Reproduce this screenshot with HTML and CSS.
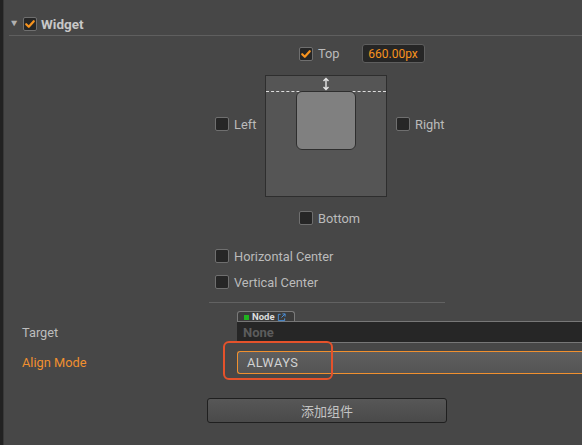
FILE: index.html
```html
<!DOCTYPE html>
<html>
<head>
<meta charset="utf-8">
<link rel="stylesheet" href="styles.css">
</head>
<body>
<div class="page">
  <div class="strip"></div>
  <div class="main">
    <div class="header">
      <span class="caret">&#9660;</span>
      <span class="cb cb-on"><svg viewBox="0 0 14 14" width="14" height="14"><path d="M3.2 7.2 L5.8 9.8 L10.8 4.2" fill="none" stroke="#f7931e" stroke-width="2.2" stroke-linecap="round" stroke-linejoin="round"/></svg></span>
      <span class="title">Widget</span>
    </div>

    <div class="wbody">
      <div class="row-top">
        <span class="cb cb-on"><svg viewBox="0 0 14 14" width="14" height="14"><path d="M3.2 7.2 L5.8 9.8 L10.8 4.2" fill="none" stroke="#f7931e" stroke-width="2.2" stroke-linecap="round" stroke-linejoin="round"/></svg></span>
        <span class="lbl">Top</span>
        <span class="numbox">660.00px</span>
      </div>

      <div class="row-diagram">
        <div class="side side-left"><span class="cb"></span><span class="lbl">Left</span></div>
        <div class="box">
          <div class="dash"></div>
          <svg class="arrow" viewBox="0 0 10 14" width="10" height="14"><path d="M5 1.5 V12.5 M2.5 4 L5 1.5 L7.5 4 M2.5 10 L5 12.5 L7.5 10" fill="none" stroke="#e6e6e6" stroke-width="1.4"/></svg>
          <div class="inner"></div>
        </div>
        <div class="side side-right"><span class="cb"></span><span class="lbl">Right</span></div>
      </div>

      <div class="row-bottom">
        <span class="cb"></span><span class="lbl">Bottom</span>
      </div>

      <div class="row-opt row-h">
        <span class="cb"></span><span class="lbl">Horizontal Center</span>
      </div>
      <div class="row-opt row-v">
        <span class="cb"></span><span class="lbl">Vertical Center</span>
      </div>
      <div class="sep"></div>
    </div>

    <div class="prop prop-target">
      <div class="plabel">Target</div>
      <div class="pval">
        <div class="tab"><span class="green"></span><span class="tabtxt">Node</span><svg class="link" viewBox="0 0 10 10" width="9" height="9"><path d="M4 1.5 H1.5 V8.5 H8.5 V6" fill="none" stroke="#4a8fd8" stroke-width="1.1"/><path d="M5 5 L9 1 M6 1 H9 V4" fill="none" stroke="#4a8fd8" stroke-width="1.1"/></svg></div>
        <div class="field">None</div>
      </div>
    </div>

    <div class="prop prop-align">
      <div class="plabel orange">Align Mode</div>
      <div class="select">ALWAYS</div>
      <div class="highlight"></div>
    </div>

    <div class="btnrow"><div class="btn">添加组件</div></div>
  </div>
</div>
</body>
</html>
```

FILE: styles.css
```css
html, body {
  margin: 0;
  padding: 0;
  background: #474747;
}
body {
  font-family: Roboto, "Liberation Sans", "Noto Sans CJK SC", sans-serif;
  font-size: 12.8px;
  color: #bdbdbd;
  width: 582px;
  height: 445px;
  overflow: hidden;
}
.page {
  display: flex;
  height: 445px;
}
.strip {
  width: 3px;
  background: #222222;
  border-right: 1px solid #383838;
  flex: none;
}
.main {
  flex: 1;
  position: relative;
}
.header {
  margin-top: 12px;
  margin-left: 5px;
  height: 23px;
  border-bottom: 1px solid #5f5f5f;
  display: flex;
  align-items: center;
}
.caret {
  font-size: 9px;
  color: #b0b0b0;
  width: 13px;
  margin-left: 1px;
  line-height: 1;
  transform: scaleX(1.15);
}
.cb {
  width: 12px;
  height: 12px;
  border: 1px solid #6f6f6f;
  background: #262626;
  border-radius: 2px;
  display: inline-flex;
  align-items: center;
  justify-content: center;
  flex: none;
}
.cb svg {
  display: block;
  flex: none;
}
.title {
  font-weight: bold;
  color: #c8c8c8;
  margin-left: 4px;
  font-size: 13.5px;
}
.lbl {
  margin-left: 5px;
  color: #bbbbbb;
  white-space: nowrap;
}
.wbody {
  margin-left: 205px;
  width: 236px;
}
.row-top {
  margin-top: 8px;
  height: 19px;
  display: flex;
  align-items: center;
  padding-left: 90px;
}
.numbox {
  margin-left: 22px;
  width: 61px;
  height: 17px;
  border: 1px solid #5e5e5e;
  border-radius: 3px;
  background: #262626;
  color: #f7931e;
  display: flex;
  align-items: center;
  justify-content: center;
  font-size: 12px;
}
.row-diagram {
  margin-top: 12px;
  display: flex;
  align-items: flex-start;
  padding-left: 6px;
}
.side {
  display: flex;
  align-items: center;
  margin-top: 42px;
  height: 14px;
}
.side-left {
  width: 50px;
}
.side-right {
  margin-left: 9px;
}
.box {
  position: relative;
  width: 120px;
  height: 120px;
  background: #555555;
  border: 1px solid #2e2e2e;
  flex: none;
}
.dash {
  position: absolute;
  left: 0;
  right: 0;
  top: 15px;
  border-top: 1px dashed #dddddd;
}
.arrow {
  position: absolute;
  left: 55px;
  top: 1px;
}
.inner {
  position: absolute;
  left: 30px;
  top: 15px;
  width: 58px;
  height: 57px;
  background: #808080;
  border: 1px solid #2e2e2e;
  border-radius: 6px;
}
.row-bottom {
  margin-top: 14px;
  height: 14px;
  display: flex;
  align-items: center;
  padding-left: 90px;
}
.row-opt {
  height: 14px;
  display: flex;
  align-items: center;
  padding-left: 6px;
}
.row-h {
  margin-top: 24px;
}
.row-v {
  margin-top: 12px;
}
.sep {
  margin-top: 13px;
  height: 1px;
  background: #626262;
}
.prop {
  display: flex;
  position: relative;
}
.plabel {
  width: 233px;
  padding-left: 18px;
  flex: none;
  box-sizing: border-box;
  color: #bdbdbd;
}
.orange {
  color: #f0902f;
}
.prop-target {
  margin-top: 9px;
}
.prop-target .plabel {
  padding-top: 13px;
}
.pval {
  flex: 1;
  min-width: 0;
}
.tab {
  height: 11px;
  border: 1px solid #7a7a7a;
  border-bottom: none;
  border-radius: 3px 3px 0 0;
  background: #3b3b3b;
  display: flex;
  align-items: center;
  padding-left: 6px;
  box-sizing: border-box;
  width: 58px;
  margin-top: -1px;
}
.green {
  width: 5px;
  height: 5px;
  background: #1fb31f;
  flex: none;
}
.tabtxt {
  font-size: 9.5px;
  font-weight: bold;
  color: #dddddd;
  margin-left: 3px;
  line-height: 10px;
}
.link {
  margin-left: 2px;
  flex: none;
}
.field {
  background: #262626;
  border-top: 1px solid #777777;
  border-bottom: 1px solid #777777;
  color: #5c5c5c;
  font-weight: bold;
  font-size: 13px;
  padding-left: 6px;
  line-height: 21px;
  margin-top: -1px;
  box-sizing: border-box;
  height: 22px;
}
.prop-align {
  margin-top: 8px;
  align-items: center;
}
.select {
  flex: 1;
  height: 23px;
  box-sizing: border-box;
  border: 1px solid #f0902f;
  border-right: none;
  border-radius: 3px 0 0 3px;
  background: linear-gradient(#5f5f5f, #545454);
  color: #d2d2d2;
  padding-left: 9px;
  line-height: 21px;
  letter-spacing: 0.5px;
}
.highlight {
  position: absolute;
  left: 219px;
  top: -10px;
  width: 106px;
  height: 35px;
  border: 2px solid #e5522b;
  border-radius: 6px;
}
.btnrow {
  margin-top: 24px;
  padding-left: 203px;
}
.btn {
  width: 238px;
  height: 23px;
  border: 1px solid #1f1f1f;
  border-radius: 3px;
  background: linear-gradient(#575757, #4a4a4a);
  color: #c4c4c4;
  display: flex;
  align-items: center;
  justify-content: center;
  font-size: 13px;
}
```
